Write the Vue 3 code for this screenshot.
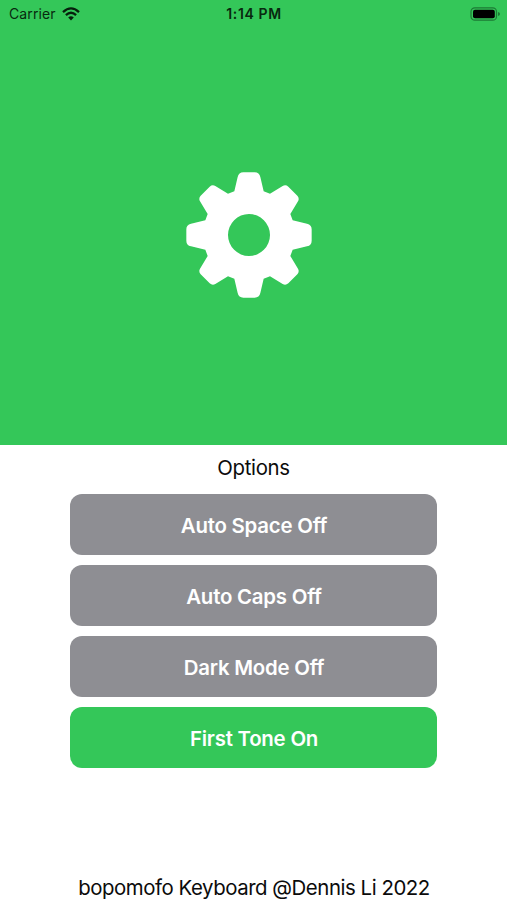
<script setup>
const options = [
  { label: 'Auto Space', on: false },
  { label: 'Auto Caps', on: false },
  { label: 'Dark Mode', on: false },
  { label: 'First Tone', on: true },
]
</script>

<template>
  <main class="screen">
    <section class="hero">
      <header class="status">
        <div class="carrier">
          <span>Carrier</span>
          <svg class="wifi" width="18" height="14" viewBox="0 0 18 14">
            <path d="M1 5.1Q9-2.3 17 5.1" />
            <path d="M3.9 8.1Q9 3.5 14.1 8.1" />
            <path class="dot" d="M6.2 10.5Q9 8.1 11.8 10.5L9 13.4Z" />
          </svg>
        </div>
        <time class="time">1:14 PM</time>
        <svg class="battery" width="31" height="14" viewBox="0 0 31 14">
          <rect class="shell" x="1" y="0.8" width="25.5" height="12.4" rx="3.8" />
          <rect x="3" y="2.8" width="21.8" height="8.4" rx="2" />
          <path class="tip" d="M28 4.9Q30 5.5 30 7T28 9.1Z" />
        </svg>
      </header>
      <div class="gear-area">
        <svg class="gear" width="126" height="126" viewBox="-189 -189 378 378">
          <path
            fill-rule="evenodd"
            d="M-44-131L-34-174Q-31-188-17-188H17Q31-188 34-174L44-131L63-124L101-147Q110-152 118-145L145-118Q152-110 147-101L124-63L131-44L174-34Q188-31 188-17V17Q188 31 174 34L131 44L124 63L147 101Q152 110 145 118L118 145Q110 152 101 147L63 124L44 131L34 174Q31 188 17 188H-17Q-31 188-34 174L-44 131L-63 124L-101 147Q-110 152-118 145L-145 118Q-152 110-147 101L-124 63L-131 44L-174 34Q-188 31-188 17V-17Q-188-31-174-34L-131-44L-124-63L-147-101Q-152-110-145-118L-118-145Q-110-152-101-147L-63-124ZM-63 0A63 63 0 1 0 63 0A63 63 0 1 0-63 0Z"
          />
        </svg>
      </div>
    </section>
    <section class="panel">
      <h1 class="title">Options</h1>
      <div class="buttons">
        <button
          v-for="o in options"
          :key="o.label"
          type="button"
          class="option"
          :class="{ on: o.on }"
        >{{ o.label }} {{ o.on ? 'On' : 'Off' }}</button>
      </div>
      <footer class="credit">bopomofo Keyboard @Dennis Li 2022</footer>
    </section>
  </main>
</template>

<style>
body {
  margin: 0;
  background: #fff;
}
</style>

<style scoped>
.screen {
  width: 507px;
  height: 900px;
  display: flex;
  flex-direction: column;
  overflow: hidden;
  background: #fff;
  color: #0b0b0b;
  font-family: Inter, "Liberation Sans", sans-serif;
}
.hero {
  height: 444.5px;
  flex: none;
  display: flex;
  flex-direction: column;
  background: #34c759;
}
.status {
  height: 27px;
  box-sizing: border-box;
  padding: 0 6px 0 9px;
  display: grid;
  grid-template-columns: 1fr auto 1fr;
  align-items: center;
  font-size: 14px;
  line-height: 27px;
  color: #08290f;
}
.carrier {
  display: flex;
  align-items: center;
  gap: 6px;
  letter-spacing: 0.1px;
}
.wifi {
  fill: none;
  stroke: #06200c;
  stroke-width: 2.3;
}
.wifi .dot {
  fill: #06200c;
  stroke: none;
}
.time {
  padding-right: 2px;
  font-weight: 600;
  letter-spacing: 0.6px;
}
.battery {
  justify-self: end;
  fill: #000;
}
.battery .shell {
  fill: none;
  stroke: #1d7a35;
  stroke-width: 1.2;
}
.battery .tip {
  fill: #1d7a35;
}
.gear-area {
  flex: 1;
  display: flex;
  justify-content: center;
  padding: 145px 10px 0 0;
}
.gear {
  fill: #fff;
}
.panel {
  flex: 1;
  display: flex;
  flex-direction: column;
  align-items: center;
}
.title {
  margin: 10px 0 13.8px;
  font-size: 20.4px;
  line-height: 26px;
  font-weight: 400;
  letter-spacing: -0.3px;
}
.buttons {
  display: flex;
  flex-direction: column;
  gap: 10px;
}
.option {
  width: 366.6px;
  height: 60.9px;
  padding: 2.6px 0 0 1px;
  border: 0;
  border-radius: 12px;
  background: #8e8e93;
  color: #fff;
  font: 600 20.4px/58px Inter, "Liberation Sans", sans-serif;
  letter-spacing: -0.22px;
}
.option.on {
  background: #34c759;
}
.credit {
  margin-top: auto;
  padding-left: 1px;
  font-size: 20.4px;
  line-height: 24px;
  letter-spacing: -0.45px;
}
</style>
